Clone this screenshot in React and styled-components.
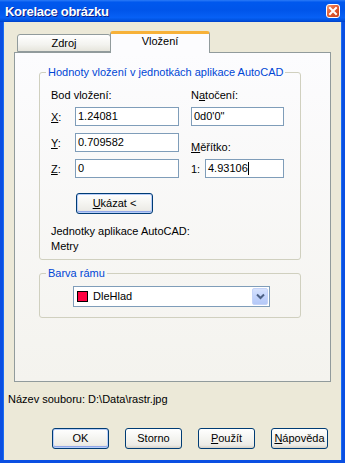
import React from 'react'
import styled, { createGlobalStyle } from 'styled-components'

const Global = createGlobalStyle`
  html, body { margin: 0; padding: 0; background: #ece9d8; }
  body { font-family: "Liberation Sans", Arial, sans-serif; font-size: 11px; color: #000; }
  * { box-sizing: border-box; }
`

const Window = styled.div`
  width: 345px;
  height: 463px;
  display: flex;
  flex-direction: column;
`

const TitleBar = styled.div`
  height: 22px;
  flex: none;
  display: flex;
  align-items: center;
  justify-content: space-between;
  padding: 0 5px 0 5px;
  background: linear-gradient(to bottom, #2b7bf7 0%, #0058ee 10%, #0055ea 45%, #0760f5 80%, #0052e0 92%, #0040c8 100%);
`

const Title = styled.div`
  color: #fff;
  font-weight: bold;
  font-size: 13px;
  text-shadow: 1px 1px 0 #0a1e8c;
  letter-spacing: -0.3px;
  padding-top: 1px;
`

const CloseBtn = styled.div`
  width: 14px;
  height: 14px;
  border: 1px solid #fff;
  border-radius: 3px;
  background: linear-gradient(135deg, #f29c74 0%, #e35c31 45%, #c8421c 100%);
  display: flex;
  align-items: center;
  justify-content: center;
`

const Body = styled.div`
  flex: 1;
  display: flex;
  flex-direction: column;
  background: #ece9d8;
  border: 3px solid #0a4fe2;
  border-top: none;
  box-shadow: inset 1px 0 0 #1a6cf2, inset -1px 0 0 #1a6cf2;
  padding: 9px 11px 0 11px;
`

const TabStrip = styled.div`
  display: flex;
  align-items: flex-end;
  height: 21px;
  padding-left: 3px;
`

const Tab = styled.div`
  position: relative;
  height: ${p => (p.$active ? 22 : 18)}px;
  width: ${p => (p.$active ? 100 : 94)}px;
  margin-left: ${p => (p.$active ? -1 : 0)}px;
  margin-bottom: ${p => (p.$active ? -1 : 0)}px;
  z-index: ${p => (p.$active ? 2 : 1)};
  border: 1px solid #919b9c;
  border-bottom: ${p => (p.$active ? 'none' : '1px solid #919b9c')};
  border-top: ${p => (p.$active ? '3px solid #f7b138' : '1px solid #919b9c')};
  border-radius: 3px 3px 0 0;
  background: ${p => (p.$active ? '#fcfcfe' : 'linear-gradient(to bottom, #ffffff 0%, #f3f3ef 60%, #e6e5dc 100%)')};
  display: flex;
  justify-content: center;
  align-items: ${p => (p.$active ? 'flex-start' : 'center')};
  padding-top: ${p => (p.$active ? 1 : 0)}px;
  font-size: 11px;
`

const Panel = styled.div`
  height: 330px;
  flex: none;
  border: 1px solid #919b9c;
  background: linear-gradient(to bottom, #fcfcfe 0%, #f4f3ee 100%);
  padding: 0 0 0 24px;
  display: flex;
  flex-direction: column;
`

const Group = styled.fieldset`
  width: 262px;
  margin: ${p => p.$top}px 0 0 0;
  padding: 0;
  border: 1px solid #d0d0bf;
  border-radius: 3px;
  min-inline-size: 0;
`

const Legend = styled.legend`
  margin-left: 6px;
  padding: 0 2px;
  color: #0046d5;
  line-height: 13px;
  font-size: 11px;
`

const GroupInner = styled.div`
  padding: ${p => p.$pad};
`

const Columns = styled.div`
  display: grid;
  grid-template-columns: 140px 93px;
`

const Col = styled.div`
  display: flex;
  flex-direction: column;
`

const Label = styled.div`
  line-height: 13px;
  height: 13px;
  margin-top: ${p => p.$mt || 0}px;
  margin-bottom: 5px;
`

const Rows = styled.div`
  display: flex;
  flex-direction: column;
  gap: 7px;
`

const Row = styled.div`
  display: flex;
  align-items: center;
  height: 19px;
`

const RowLabel = styled.span`
  width: ${p => p.$w}px;
  flex: none;
`

const Field = styled.div`
  width: ${p => p.$w}px;
  height: 19px;
  border: 1px solid #7f9db9;
  background: #fff;
  padding: 0 0 0 2px;
  display: flex;
  align-items: center;
  line-height: 13px;
`

const Caret = styled.span`
  display: inline-block;
  width: 1px;
  height: 13px;
  background: #000;
`

const Button = styled.div`
  width: ${p => p.$w}px;
  height: 21px;
  margin: ${p => p.$m || 0};
  border: 1px solid #003c74;
  border-radius: 3px;
  background: linear-gradient(to bottom, #ffffff 0%, #f4f4f0 50%, #ecebe6 85%, #d6d0c5 100%);
  box-shadow: ${p => (p.$focus ? 'inset 0 0 0 1px #b8cef9, inset 0 -1px 0 1px #91a7e8' : 'none')};
  display: flex;
  align-items: center;
  justify-content: center;
  line-height: 13px;
`

const Info = styled.div`
  line-height: 15px;
  margin-top: 10px;
`

const Combo = styled.div`
  width: 197px;
  height: 21px;
  border: 1px solid #7f9db9;
  background: #fff;
  display: flex;
  align-items: center;
  padding: 1px 1px 1px 3px;
`

const Swatch = styled.span`
  width: 11px;
  height: 11px;
  border: 1px solid #000;
  background: ${p => p.$color};
  margin-right: 5px;
  flex: none;
`

const ComboText = styled.span`
  flex: 1;
  line-height: 13px;
`

const DropBtn = styled.div`
  width: 16px;
  height: 17px;
  border-radius: 2px;
  border: 1px solid #c4d3f8;
  background: linear-gradient(to bottom, #d6e2fd 0%, #c3d4fc 50%, #b4c8f7 100%);
  display: flex;
  align-items: center;
  justify-content: center;
`

const FileName = styled.div`
  margin: 11px 0 0 -6px;
  line-height: 13px;
`

const ButtonBar = styled.div`
  display: flex;
  gap: 16px;
  margin: 22px 0 0 38px;
`

const U = styled.span`
  text-decoration: underline;
  text-underline-offset: 1px;
`

const App = () => {
  return (
    <>
      <Global />
      <Window>
        <TitleBar>
          <Title>Korelace obrázku</Title>
          <CloseBtn>
            <svg width="10" height="10" viewBox="0 0 10 10">
              <path d="M2 2 L8 8 M8 2 L2 8" stroke="#fff" strokeWidth="2" strokeLinecap="square" />
            </svg>
          </CloseBtn>
        </TitleBar>
        <Body>
          <TabStrip>
            <Tab>Zdroj</Tab>
            <Tab $active>Vložení</Tab>
          </TabStrip>
          <Panel>
            <Group $top={13}>
              <Legend>Hodnoty vložení v jednotkách aplikace AutoCAD</Legend>
              <GroupInner $pad="10px 0 5px 11px">
                <Columns>
                  <Col>
                    <Label>Bod vložení:</Label>
                    <Rows>
                      <Row>
                        <RowLabel $w={24}><U>X</U>:</RowLabel>
                        <Field $w={104}>1.24081</Field>
                      </Row>
                      <Row>
                        <RowLabel $w={24}><U>Y</U>:</RowLabel>
                        <Field $w={104}>0.709582</Field>
                      </Row>
                      <Row>
                        <RowLabel $w={24}><U>Z</U>:</RowLabel>
                        <Field $w={104}>0</Field>
                      </Row>
                    </Rows>
                  </Col>
                  <Col>
                    <Label>N<U>a</U>točení:</Label>
                    <Field $w={93}>0d0'0"</Field>
                    <Label $mt={15}><U>M</U>ěřítko:</Label>
                    <Row>
                      <RowLabel $w={14}>1:</RowLabel>
                      <Field $w={79}>4.93106<Caret /></Field>
                    </Row>
                  </Col>
                </Columns>
                <Button $w={77} $m="15px 0 0 25px" $focus>
                  <span><U>U</U>kázat &lt;</span>
                </Button>
                <Info>
                  Jednotky aplikace AutoCAD:
                  <br />
                  Metry
                </Info>
              </GroupInner>
            </Group>
            <Group $top={7}>
              <Legend>Barva rámu</Legend>
              <GroupInner $pad="6px 0 10px 33px">
                <Combo>
                  <Swatch $color="#ff0040" />
                  <ComboText>DleHlad</ComboText>
                  <DropBtn>
                    <svg width="9" height="7" viewBox="0 0 9 7">
                      <path d="M1 1.5 L4.5 5 L8 1.5" stroke="#4d6185" strokeWidth="2" fill="none" />
                    </svg>
                  </DropBtn>
                </Combo>
              </GroupInner>
            </Group>
          </Panel>
          <FileName>Název souboru: D:\Data\rastr.jpg</FileName>
          <ButtonBar>
            <Button $w={57} $focus>OK</Button>
            <Button $w={57}>Storno</Button>
            <Button $w={57}><span><U>P</U>oužít</span></Button>
            <Button $w={57}><span><U>N</U>ápověda</span></Button>
          </ButtonBar>
        </Body>
      </Window>
    </>
  )
}

export default App
